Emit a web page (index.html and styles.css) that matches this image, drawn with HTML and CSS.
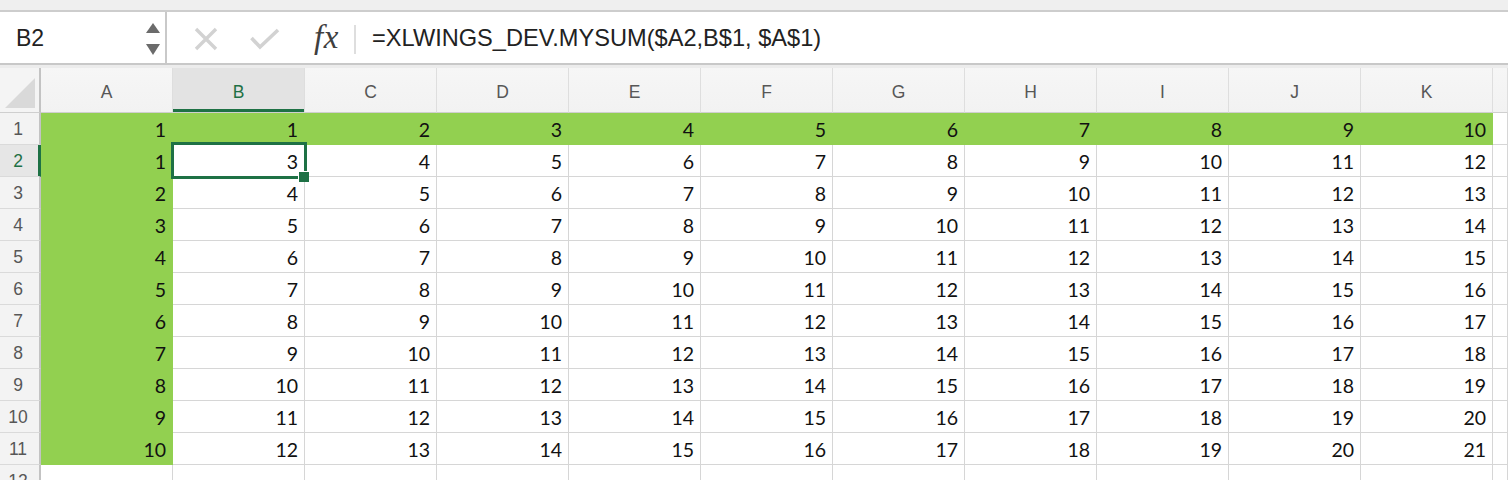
FILE: index.html
```html
<!DOCTYPE html>
<html>
<head>
<meta charset="utf-8">
<link rel="stylesheet" href="styles.css">
</head>
<body>
<div class="app">
  <div class="topstrip"></div>
  <div class="fbar">
    <div class="namebox">
      <span class="ref">B2</span>
      <div class="spin">
        <svg width="16" height="34" viewBox="0 0 16 34"><path d="M1 11 L8 1 L15 11 Z" fill="#6b6b6b"/><path d="M1 22 L15 22 L8 33 Z" fill="#6b6b6b"/></svg>
      </div>
    </div>
    <div class="tools">
      <svg class="ico-x" width="24" height="24" viewBox="0 0 24 24"><path d="M2 2 L22 22 M22 2 L2 22" stroke="#d2d2d2" stroke-width="3.4" fill="none"/></svg>
      <svg class="ico-ok" width="30" height="22" viewBox="0 0 30 22"><path d="M1.5 10 L10 19 L28 2" stroke="#d2d2d2" stroke-width="3.6" fill="none"/></svg>
      <span class="fx">fx</span>
      <span class="sep"></span>
    </div>
    <div class="formula">=XLWINGS_DEV.MYSUM($A2,B$1, $A$1)</div>
  </div>
  <div class="gap"></div>
  <div class="sheet">
    <div class="corner"><span class="tri"></span></div>
    <div class="ch">A</div><div class="ch sel">B</div><div class="ch">C</div><div class="ch">D</div><div class="ch">E</div><div class="ch">F</div><div class="ch">G</div><div class="ch">H</div><div class="ch">I</div><div class="ch">J</div><div class="ch">K</div><div class="ch"></div>

    <div class="rh">1</div><div class="c g">1</div><div class="c g">1</div><div class="c g">2</div><div class="c g">3</div><div class="c g">4</div><div class="c g">5</div><div class="c g">6</div><div class="c g">7</div><div class="c g">8</div><div class="c g">9</div><div class="c g">10</div><div class="c"></div>
    <div class="rh sel">2</div><div class="c g">1</div><div class="c">3</div><div class="c">4</div><div class="c">5</div><div class="c">6</div><div class="c">7</div><div class="c">8</div><div class="c">9</div><div class="c">10</div><div class="c">11</div><div class="c">12</div><div class="c"></div>
    <div class="rh">3</div><div class="c g">2</div><div class="c">4</div><div class="c">5</div><div class="c">6</div><div class="c">7</div><div class="c">8</div><div class="c">9</div><div class="c">10</div><div class="c">11</div><div class="c">12</div><div class="c">13</div><div class="c"></div>
    <div class="rh">4</div><div class="c g">3</div><div class="c">5</div><div class="c">6</div><div class="c">7</div><div class="c">8</div><div class="c">9</div><div class="c">10</div><div class="c">11</div><div class="c">12</div><div class="c">13</div><div class="c">14</div><div class="c"></div>
    <div class="rh">5</div><div class="c g">4</div><div class="c">6</div><div class="c">7</div><div class="c">8</div><div class="c">9</div><div class="c">10</div><div class="c">11</div><div class="c">12</div><div class="c">13</div><div class="c">14</div><div class="c">15</div><div class="c"></div>
    <div class="rh">6</div><div class="c g">5</div><div class="c">7</div><div class="c">8</div><div class="c">9</div><div class="c">10</div><div class="c">11</div><div class="c">12</div><div class="c">13</div><div class="c">14</div><div class="c">15</div><div class="c">16</div><div class="c"></div>
    <div class="rh">7</div><div class="c g">6</div><div class="c">8</div><div class="c">9</div><div class="c">10</div><div class="c">11</div><div class="c">12</div><div class="c">13</div><div class="c">14</div><div class="c">15</div><div class="c">16</div><div class="c">17</div><div class="c"></div>
    <div class="rh">8</div><div class="c g">7</div><div class="c">9</div><div class="c">10</div><div class="c">11</div><div class="c">12</div><div class="c">13</div><div class="c">14</div><div class="c">15</div><div class="c">16</div><div class="c">17</div><div class="c">18</div><div class="c"></div>
    <div class="rh">9</div><div class="c g">8</div><div class="c">10</div><div class="c">11</div><div class="c">12</div><div class="c">13</div><div class="c">14</div><div class="c">15</div><div class="c">16</div><div class="c">17</div><div class="c">18</div><div class="c">19</div><div class="c"></div>
    <div class="rh">10</div><div class="c g">9</div><div class="c">11</div><div class="c">12</div><div class="c">13</div><div class="c">14</div><div class="c">15</div><div class="c">16</div><div class="c">17</div><div class="c">18</div><div class="c">19</div><div class="c">20</div><div class="c"></div>
    <div class="rh">11</div><div class="c g">10</div><div class="c">12</div><div class="c">13</div><div class="c">14</div><div class="c">15</div><div class="c">16</div><div class="c">17</div><div class="c">18</div><div class="c">19</div><div class="c">20</div><div class="c">21</div><div class="c"></div>
    <div class="rh">12</div><div class="c"></div><div class="c"></div><div class="c"></div><div class="c"></div><div class="c"></div><div class="c"></div><div class="c"></div><div class="c"></div><div class="c"></div><div class="c"></div><div class="c"></div><div class="c"></div>

    <div class="selbox"></div>
    <div class="handle"></div>
  </div>
</div>
</body>
</html>
```

FILE: styles.css
```css
* { box-sizing: border-box; }
html, body { margin: 0; padding: 0; background: #ffffff; }
.app { width: 1508px; height: 480px; overflow: hidden; }

.topstrip { height: 12px; background: #efefef; border-bottom: 2px solid #cdcdcd; }

.fbar {
  height: 53px;
  display: flex;
  background: #ffffff;
  border-bottom: 2px solid #c8c8c8;
}
.namebox {
  width: 167px;
  display: flex;
  align-items: center;
  justify-content: space-between;
  padding: 0 4px 0 16px;
  border-right: 2px solid #c9c9c9;
}
.ref {
  font-family: "Liberation Sans", Arial, sans-serif;
  font-size: 23px;
  color: #222;
  margin-top: 1px;
}
.spin { display: flex; align-items: center; margin-top: 2px; }
.spin svg { display: block; }

.tools {
  display: flex;
  align-items: center;
  padding-left: 27px;
  width: 205px;
}
.ico-x { display: block; margin-top: 3px; }
.ico-ok { display: block; margin-left: 32px; margin-top: 3px; }
.fx {
  font-family: "Liberation Serif", "Times New Roman", serif;
  font-style: italic;
  font-size: 33px;
  color: #3f3f3f;
  margin-left: 34px;
  margin-top: 0;
  letter-spacing: 0.5px;
}
.sep {
  width: 2px;
  height: 29px;
  background: #dedede;
  margin-left: 15px;
  margin-top: 3px;
}
.formula {
  flex: 1;
  display: flex;
  align-items: center;
  padding-left: 0;
  font-family: "Liberation Sans", Arial, sans-serif;
  font-size: 23.6px;
  color: #222;
  background: #ffffff;
  padding-top: 1px;
}

.gap { height: 3px; background: #ececec; }

.sheet {
  position: relative;
  display: grid;
  grid-template-columns: 41px repeat(11, 132px) 1fr;
  grid-template-rows: 45px;
  grid-auto-rows: 32px;
}

.corner {
  position: relative;
  background: #f4f4f4;
  border-right: 2px solid #c3c3c3;
  border-bottom: 1px solid #cfcfcf;
}
.tri {
  position: absolute;
  right: 4px;
  bottom: 4px;
  width: 0;
  height: 0;
  border-left: 30px solid transparent;
  border-bottom: 30px solid #d9d9d9;
}

.ch {
  display: flex;
  align-items: center;
  justify-content: center;
  padding-top: 4px;
  background: linear-gradient(#f6f6f6, #f2f2f2);
  border-right: 1px solid #dedede;
  border-bottom: 1px solid #cfcfcf;
  font-family: "Liberation Sans", Arial, sans-serif;
  font-size: 17.5px;
  color: #575757;
}
.ch.sel {
  background: #e3e3e3;
  color: #1e7145;
  box-shadow: inset 0 -3px 0 #1e7145;
}

.rh {
  display: flex;
  align-items: center;
  justify-content: center;
  padding-right: 3px;
  padding-top: 1px;
  background: #f3f3f3;
  border-right: 2px solid #c3c3c3;
  border-bottom: 1px solid #dadada;
  font-family: "Liberation Sans", Arial, sans-serif;
  font-size: 17.5px;
  color: #575757;
}
.rh.sel {
  color: #1e7145;
  background: #e6e6e6;
  border-right-color: #1e7145;
  box-shadow: inset -1px 0 0 #1e7145;
}

.c {
  display: flex;
  align-items: center;
  justify-content: flex-end;
  padding-right: 6px;
  padding-top: 1px;
  border-right: 1px solid #d6d6d6;
  border-bottom: 1px solid #d6d6d6;
  font-family: Lato, "Open Sans", sans-serif;
  font-size: 19.5px;
  color: #111;
  background: #ffffff;
}
.c.g {
  background: #92d050;
  border-color: #92d050;
}

.selbox {
  position: absolute;
  left: 171px;
  top: 74px;
  width: 136px;
  height: 37px;
  border: 3px solid #1e7145;
  pointer-events: none;
}
.handle {
  position: absolute;
  left: 298px;
  top: 103px;
  width: 11px;
  height: 11px;
  background: #1e7145;
  border-left: 1px solid #ffffff;
  border-top: 1px solid #ffffff;
}
```
